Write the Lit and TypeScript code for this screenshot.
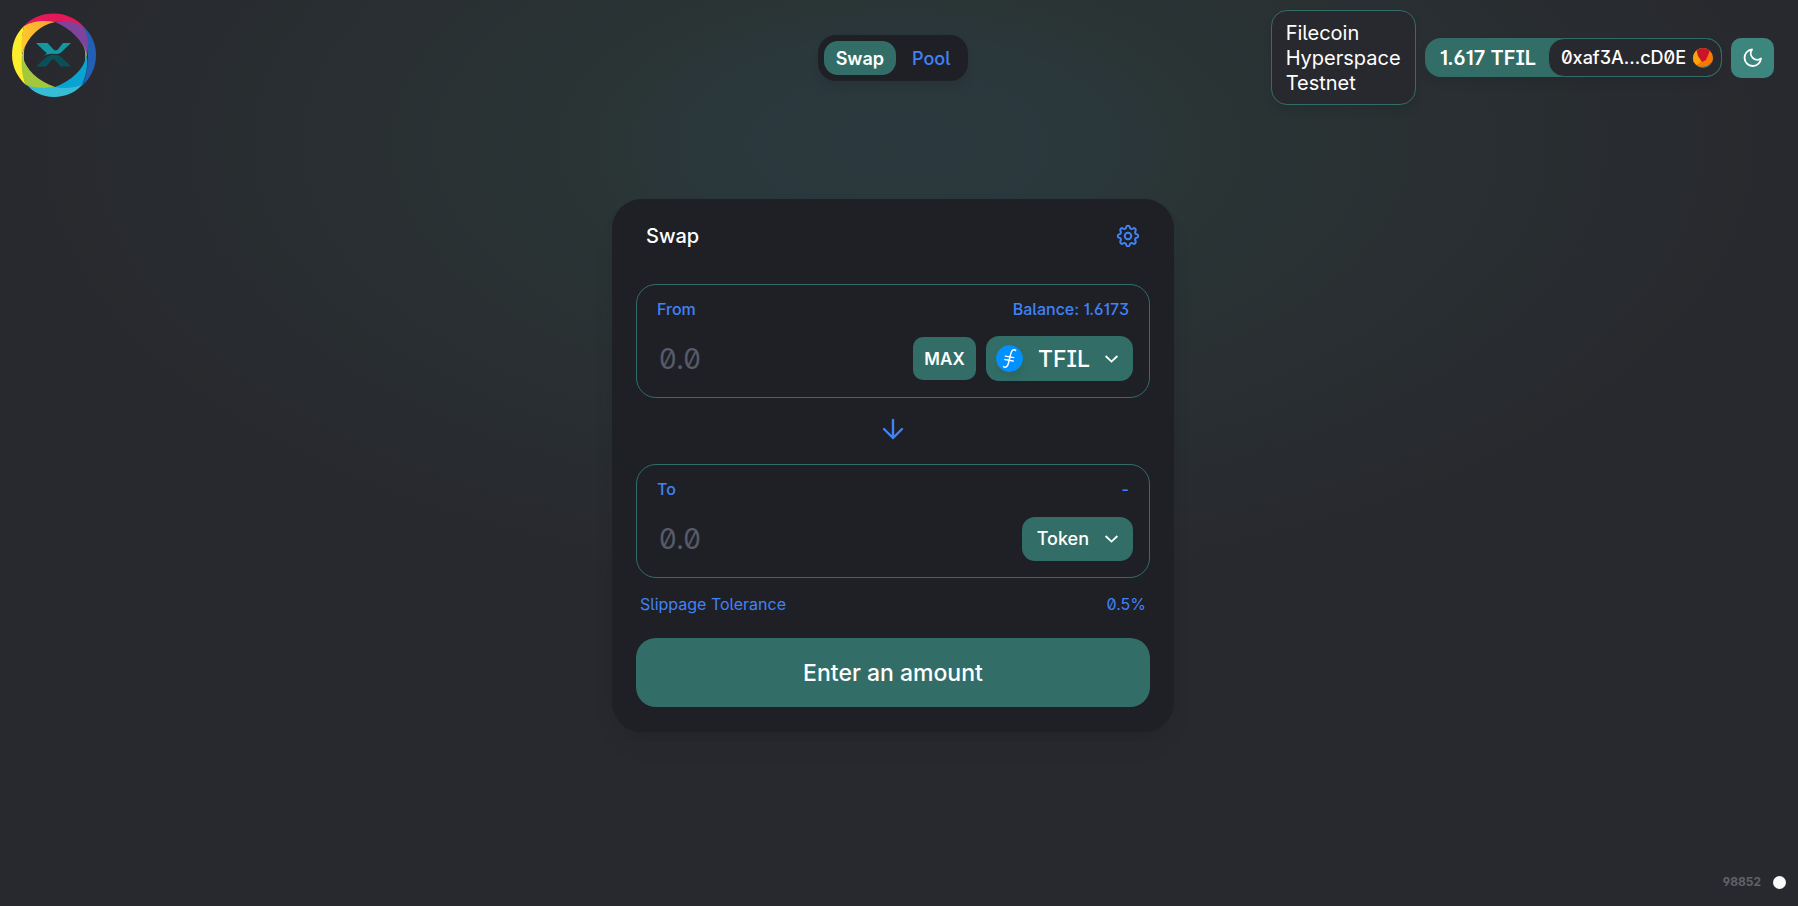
import { LitElement, html, css } from "lit";
import { customElement, property, state } from "lit/decorators.js";

const chevron = html`<svg class="chevron" width="13" height="8" viewBox="0 0 13 8" fill="none" stroke="#fff" stroke-width="1.800" aria-hidden="true"><path d="M.6 1l5.900 5.600L12.400 1"/></svg>`;

const filecoin = html`<svg class="coin" width="27" height="27" viewBox="0 0 28 28" fill="none" aria-hidden="true">
  <circle cx="14" cy="14" r="14" fill="#0090ff"/>
  <path d="M20.400 5.800c-.7-1.500-3.300-1.100-4.300 1.200-.9 2.200-1.500 4.700-2.200 7.800-.7 3.300-1.200 5.600-2.300 7-1.100 1.500-3 1.800-3.700.6" stroke="#fff" stroke-width="1.500" stroke-linecap="round"/>
  <path d="M9.600 11.600l8.800 1.500M9.100 15l8.800 1.600" stroke="#fff" stroke-width="1.400" stroke-linecap="round"/>
</svg>`;

@customElement("token-panel")
export class TokenPanel extends LitElement {
  @property() label = "";
  @property() note = "";
  @property() token = "";

  static styles = css`
    :host { display: block; }
    .panel {
      border: 1px solid #326e67;
      border-radius: 20px;
      height: 112px;
    }
    .top {
      display: flex;
      justify-content: space-between;
      padding: 12px 20px 0;
      font-size: 16px;
      font-weight: 500;
      line-height: 24px;
      color: #4082f8;
    }
    .row {
      display: flex;
      align-items: center;
      gap: 10px;
      padding: 14px 16px 0 20px;
      height: 47px;
    }
    input {
      flex: 1;
      min-width: 0;
      height: 36px;
      padding: 0 2px;
      border: 0;
      outline: 0;
      background: transparent;
      color: #fff;
      font: inherit;
      font-size: 28px;
      font-feature-settings: inherit;
    }
    input::placeholder { color: #565a69; opacity: 1; }
    button {
      display: flex;
      align-items: center;
      border: 0;
      background: #326e67;
      color: #fff;
      font: inherit;
      font-weight: 500;
      font-feature-settings: inherit;
      cursor: pointer;
    }
    .max {
      justify-content: center;
      width: 63px;
      height: 43px;
      padding: 0;
      border-radius: 10px;
      font-size: 17px;
      font-weight: 600;
    }
    .pick {
      gap: 16px;
      height: 44px;
      padding: 0 15px;
      border-radius: 13px;
      font-size: 18px;
    }
    .pick.chosen { gap: 15px; height: 45px; padding-left: 10px; font-size: 23px; }
    .coin { border-radius: 50%; box-shadow: 0 6px 10px rgba(0, 0, 0, 0.08); }
  `;

  render() {
    return html`
      <div class="panel">
        <div class="top"><label for="amount">${this.label}</label><span>${this.note}</span></div>
        <div class="row">
          <input id="amount" type="text" inputmode="decimal" placeholder="0.0" />
          ${this.token
            ? html`<button class="max">MAX</button>
                <button class="pick chosen">${filecoin}<span>${this.token}</span>${chevron}</button>`
            : html`<button class="pick"><span>Token</span>${chevron}</button>`}
        </div>
      </div>
    `;
  }
}

@customElement("app-root")
export class AppRoot extends LitElement {
  @state() block = 98852;

  static styles = css`
    :host {
      display: block;
      font-family: Inter, "Liberation Sans", sans-serif;
      font-feature-settings: "ss01" on, "ss02" on, "cv01" on, "cv03" on;
      color: #fff;
    }
    .page {
      box-sizing: border-box;
      display: flex;
      flex-direction: column;
      min-height: 100vh;
      padding-right: 12px;
      background: radial-gradient(50% 50% at 50% 50%, #2b393e 0%, #2a373b 24%, #2a3535 32%, #292f32 62%, #28292e 100%) 0 -34vh no-repeat #28292e;
    }
    header {
      display: grid;
      grid-template-columns: 1fr auto 1fr;
      align-items: center;
      padding: 10px 12px;
    }
    .logo { display: block; align-self: start; width: 84px; height: 88px; }
    nav {
      display: flex;
      padding: 6px;
      border-radius: 18px;
      background: #1f2025;
      box-shadow: 0 6px 10px rgba(0, 0, 0, 0.08);
    }
    nav a {
      padding: 1px 12px 0;
      border-radius: 14px;
      font-size: 18px;
      font-weight: 500;
      line-height: 33px;
      color: #4082f8;
      text-decoration: none;
    }
    nav a + a { padding-left: 16px; }
    nav .active { background: #326e67; color: #fff; font-weight: 600; }
    .tools { display: flex; align-items: center; justify-content: flex-end; gap: 9px; }
    .network {
      box-sizing: border-box;
      width: 145px;
      padding: 10px 14px 8px;
      border: 1px solid #326e67;
      border-radius: 16px;
      background: #28292e;
      box-shadow: 0 6px 10px rgba(0, 0, 0, 0.08);
      font-size: 20px;
      line-height: 25px;
    }
    .account {
      display: flex;
      align-items: center;
      border-radius: 16px;
      background: #326e67;
      font-size: 20px;
      font-weight: 500;
      box-shadow: 0 6px 10px rgba(0, 0, 0, 0.08);
    }
    .balance { padding: 0 12px 0 15px; font-weight: 600; }
    button {
      border: 0;
      color: #fff;
      font: inherit;
      font-feature-settings: inherit;
      cursor: pointer;
    }
    .wallet {
      display: flex;
      align-items: center;
      gap: 7px;
      height: 39px;
      padding: 0 8px 0 12px;
      border: 1px solid #326e67;
      border-radius: 16px;
      background: #28292e;
      font-size: 18px;
    }
    .mode {
      display: grid;
      place-items: center;
      width: 43px;
      height: 40px;
      padding: 0;
      border-radius: 10px;
      background: #3c867e;
    }
    main {
      box-sizing: border-box;
      width: 562px;
      max-width: 100%;
      margin: 84px auto 0;
      padding: 0 24px 25px;
      border-radius: 30px;
      background: #1f2025;
      box-shadow: 0 0 1px rgba(0, 0, 0, 0.01), 0 4px 8px rgba(0, 0, 0, 0.04), 0 16px 24px rgba(0, 0, 0, 0.04);
    }
    .head {
      display: flex;
      align-items: center;
      justify-content: space-between;
      height: 73px;
      padding: 0 10px;
      margin-bottom: 12px;
    }
    h1 { margin: 0; font-size: 20px; font-weight: 500; }
    .gear, .flip { display: grid; place-items: center; padding: 0; background: none; }
    .flip { width: 100%; height: 66px; padding-bottom: 5px; }
    .slippage {
      display: flex;
      justify-content: space-between;
      padding: 14px 4px 21px;
      font-size: 16px;
      line-height: 25px;
      color: #4082f8;
    }
    .submit {
      display: block;
      width: 100%;
      height: 69px;
      border-radius: 20px;
      background: #326e67;
      font-size: 23px;
      font-weight: 500;
    }
    footer {
      display: flex;
      align-items: center;
      justify-content: flex-end;
      gap: 12px;
      margin-top: auto;
      padding: 0 0 16px;
      font-size: 12px;
      font-weight: 700;
      line-height: 16px;
      color: #606167;
    }
    .dot { width: 13px; height: 13px; border-radius: 50%; background: #fafafa; }
  `;

  render() {
    return html`
      <div class="page">
        <header>
          <svg class="logo" viewBox="0 0 84 88" aria-label="Home" role="img">
            <defs><linearGradient id="sun" x1="0" y1="0.3" x2="1" y2="0"><stop offset="0" stop-color="#ffc62c"/><stop offset="1" stop-color="#f79a3c"/></linearGradient></defs>
            <path d="M12 16C19 8 30 3.500 42 3.500c11 0 22 4.500 30 13.500-9-4-19-6-30-5C28 11 20 13 12 16z" fill="#e5185a"/>
            <path d="M72 17c8 8 12 17 12 28 0 12-5 23-14 31 4-9 6-20 6-30 0-12-1-20-4-29z" fill="#235fb2"/>
            <path d="M14 74c9 3 18 4 28 3 12 0 20-1 29-3-7 8-17 13-29 13S21 82 14 74z" fill="#36bcd4"/>
            <path d="M12 16C4 24 0 33 0 45c0 12 6 23 14 30-3-8-4-18-4-29 0-12 0-21 2-30z" fill="#fcee2d"/>
            <path d="M12 16c9-5 19-6 31-4C28 15 16 26 10 44c-1-11 0-20 2-28z" fill="url(#sun)"/>
            <path d="M43 12c11-2 21 0 29 5 4 9 5 18 3 29-4-16-16-27-32-34z" fill="#80439b"/>
            <path d="M75 46c1 10-1 20-5 29-9 3-18 4-27 2 16-6 28-17 32-31z" fill="#08a3d1"/>
            <path d="M10 45c4 15 16 26 33 32-11 2-20 1-29-2-4-9-5-19-4-30z" fill="#a3c83c"/>
            <path d="M14 32c-3 9-3 19 0 27l-4-14z" fill="#cfe07c"/>
            <path d="M71 32c3 9 3 19 0 27l4-14z" fill="#80c24c"/>
            <path d="M24 33h11.500l6 6.500c1.500 1.500 3 1.500 4.500-.3L51 33h8L49 42.500c-3 2.200-6 1.200-9 1.200-3.500.2-6 .8-9 2.300l4-2.500z" fill="#1697a0"/>
            <path d="M59 56.500H48.500L43 50c-1-1-2.500-1-3.500 0L34 56.500H24L34.500 47c5-3.500 9.500-3.500 14.500 0z" fill="#0a5058"/>
          </svg>
          <nav>
            <a class="active" href="#swap">Swap</a>
            <a href="#pool">Pool</a>
          </nav>
          <div class="tools">
            <div class="network">Filecoin Hyperspace Testnet</div>
            <div class="account">
              <span class="balance">1.617 TFIL</span>
              <button class="wallet">
                0xaf3A...cD0E
                <svg width="20" height="20" viewBox="0 0 20 20" aria-hidden="true">
                  <defs><clipPath id="round"><circle cx="10" cy="10" r="10"/></clipPath></defs>
                  <g clip-path="url(#round)">
                    <rect width="20" height="20" fill="#3c867e"/>
                    <path d="M0 0h20v13l-6 5-7 1-7-4z" fill="#fb7602"/>
                    <path d="M0 0h6l3 13-5 4-4-3z" fill="#fba30a"/>
                    <path d="M3 0h15l-5 12-4 2-4-6z" fill="#c81528"/>
                  </g>
                </svg>
              </button>
            </div>
            <button class="mode" aria-label="Toggle theme">
              <svg width="20" height="20" viewBox="0 0 24 24" fill="none" stroke="#fff" stroke-width="2" stroke-linecap="round" stroke-linejoin="round"><path d="M21 12.790A9 9 0 1 1 11.210 3 7 7 0 0 0 21 12.790z" transform="translate(-1.500 -1.500) scale(1.100)"/></svg>
            </button>
          </div>
        </header>
        <main>
          <div class="head">
            <h1>Swap</h1>
            <button class="gear" aria-label="Settings">
              <svg width="24" height="24" viewBox="0 0 24 24" fill="none" stroke="#4082f8" stroke-width="2" stroke-linejoin="round">
                <circle cx="12" cy="12" r="3.300"/>
                <path d="M10.200 3.200C10.500 1.300 13.500 1.300 13.800 3.200C14 4.900 15.500 5.400 16.900 4.500C18.500 3.400 20.600 5.500 19.500 7.100C18.600 8.500 19.100 10 20.800 10.200C22.700 10.500 22.700 13.500 20.800 13.800C19.100 14 18.600 15.500 19.500 16.900C20.600 18.500 18.500 20.600 16.900 19.500C15.500 18.600 14 19.100 13.800 20.800C13.500 22.700 10.500 22.700 10.200 20.800C10 19.100 8.500 18.600 7.100 19.500C5.500 20.600 3.400 18.500 4.500 16.900C5.400 15.500 4.900 14 3.200 13.800C1.300 13.500 1.300 10.500 3.200 10.200C4.900 10 5.400 8.500 4.500 7.100C3.400 5.500 5.500 3.400 7.100 4.500C8.500 5.400 10 4.900 10.200 3.200Z"/>
              </svg>
            </button>
          </div>
          <token-panel label="From" note="Balance: 1.6173" token="TFIL"></token-panel>
          <button class="flip" aria-label="Switch direction">
            <svg width="22" height="22" viewBox="0 0 22 22" fill="none" stroke="#4082f8" stroke-width="2.400" stroke-linecap="round" stroke-linejoin="round"><path d="M11 2v18M2 11l9 9 9-9"/></svg>
          </button>
          <token-panel label="To" note="-"></token-panel>
          <div class="slippage"><span>Slippage Tolerance</span><span>0.5%</span></div>
          <button class="submit">Enter an amount</button>
        </main>
        <footer><span>${this.block}</span><span class="dot"></span></footer>
      </div>
    `;
  }
}
